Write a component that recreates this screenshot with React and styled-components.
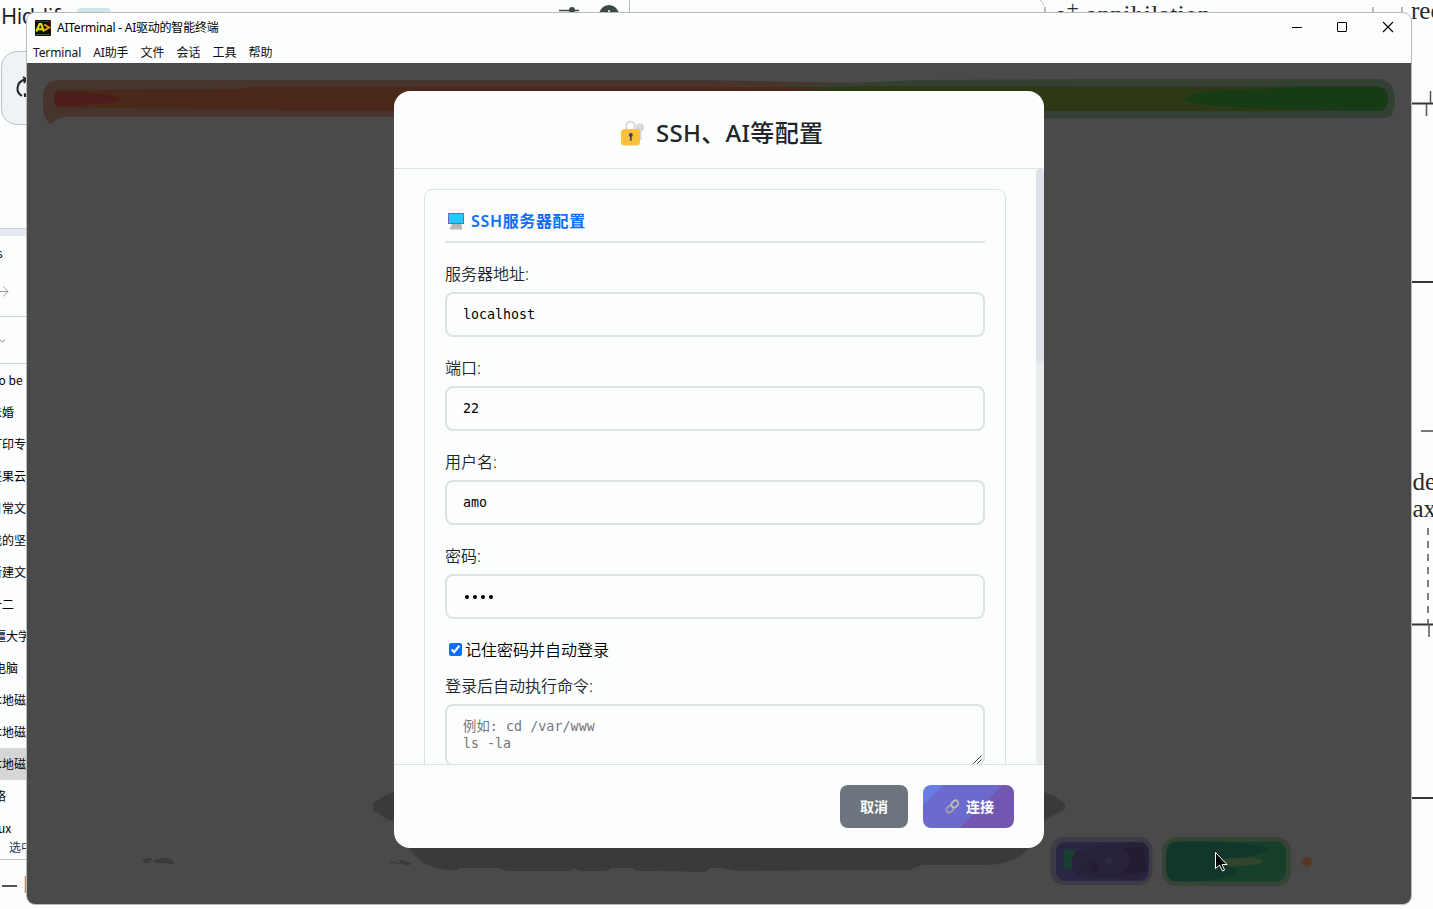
import React from "react";
import styled, { createGlobalStyle } from "styled-components";

const Global = createGlobalStyle`
  * { box-sizing: border-box; }
  html, body { margin: 0; padding: 0; overflow: hidden; background: #fcfdfd; }
  body { font-family: "Noto Sans", "Noto Sans CJK SC", sans-serif; color: #212529; }
`;

const Desktop = styled.div`
  position: relative;
  width: 1433px;
  height: 909px;
  overflow: hidden;
  background: #fcfdfd;
`;

/* ---------- windows lying behind ---------- */
const BackWindow = styled.section`
  position: absolute;
  left: ${(p) => p.$x}px;
  top: ${(p) => p.$y}px;
  width: ${(p) => p.$w}px;
  height: ${(p) => p.$h}px;
  overflow: hidden;
`;
const ProxyHeader = styled.header`
  display: flex;
  align-items: flex-start;
  height: 51px;
  padding-left: 1px;
`;
const ProxyName = styled.span`
  font: 400 22px/30px "Open Sans", sans-serif;
  letter-spacing: -0.5px;
  color: #1d2022;
  width: 76px;
`;
const ProxyBadge = styled.span`
  width: 34px;
  height: 20px;
  margin-top: 8px;
  border-radius: 4px;
  background: #cfe6eb;
`;
const ProxyCard = styled.div`
  display: flex;
  align-items: center;
  width: 120px;
  height: 74px;
  margin-left: 1px;
  padding-left: 13px;
  border: 1px solid #bcc3c6;
  border-radius: 16px;
  background: #eef3f6;
`;
const FileStrip = styled.div`
  height: 8px;
  background: #e5e9ee;
  border-top: 1px solid #cfd2d4;
`;
const Cell = styled.div`
  display: flex;
  align-items: center;
  height: ${(p) => p.$h}px;
  padding-bottom: ${(p) => p.$pb || 0}px;
  border-bottom: 1px solid ${(p) => (p.$line ? "#cfd2d4" : "transparent")};
`;
const FileRow = styled.div`
  height: 32px;
  font: 12px/31px "Noto Sans CJK SC", sans-serif;
  color: #000;
  white-space: nowrap;
  text-indent: ${(p) => p.$shift}px;
  letter-spacing: ${(p) => p.$ls || 0}px;
  background: ${(p) => (p.$active ? "#d6d6d6" : "transparent")};
`;
const StatusText = styled.div`
  padding-left: 9px;
  height: 20px;
  margin-top: -4px;
  font: 12px/14px "Noto Sans CJK SC", sans-serif;
  color: #24365e;
  white-space: nowrap;
  border-bottom: 1px solid #c0c0c0;
`;
const PaperText = styled.div`
  font: 25px/27px "Liberation Serif", serif;
  letter-spacing: ${(p) => p.$ls || 0}px;
  color: #2b2b2b;
  white-space: nowrap;
  margin-top: ${(p) => p.$mt}px;
  margin-left: ${(p) => p.$ml}px;
`;
const Superscript = styled.span`
  font-size: 22px;
  line-height: 0;
  vertical-align: 7px;
`;
const Art = styled.svg`
  position: absolute;
  inset: 0;
  display: block;
`;

/* ---------- main window ---------- */
const Window = styled.main`
  position: absolute;
  left: 26px;
  top: 12px;
  width: 1386px;
  height: 893px;
  display: flex;
  flex-direction: column;
  border: 1px solid #b9bbbb;
  border-radius: 9px;
  overflow: hidden;
  background: #fcfdfd;
`;
const TitleBar = styled.header`
  display: flex;
  align-items: center;
  height: 29px;
  padding: 0 17px 0 8px;
`;
const Title = styled.span`
  flex: 1;
  margin-left: 6px;
  font: 12px/20px "Noto Sans", "Noto Sans CJK SC", sans-serif;
  letter-spacing: -0.24px;
  color: #000;
`;
const WindowButtons = styled.div`
  display: flex;
  gap: ${33}px;
  margin-top: -1px;
`;
const MenuBar = styled.nav`
  display: flex;
  gap: 12px;
  height: 21px;
  padding-left: 6px;
  font: 12px/21px "Noto Sans", "Noto Sans CJK SC", sans-serif;
  color: #111;
`;
const MenuItem = styled.span`
  letter-spacing: ${(p) => p.$ls || 0}px;
`;
const Backdrop = styled.div`
  position: relative;
  flex: 1;
  display: flex;
  justify-content: center;
  align-items: flex-start;
  padding: 28px 0 0 0;
  background: #4a4a4a;
`;
const Dialog = styled.section`
  position: relative;
  display: flex;
  flex-direction: column;
  width: 650px;
  height: 757px;
  border-radius: 16px;
  overflow: hidden;
  background: #fcfdfd;
`;
const DialogHeader = styled.header`
  display: flex;
  align-items: center;
  gap: 11px;
  height: 78px;
  padding: 6px 0 0 226px;
  border-bottom: 1px solid #dee2e6;
`;
const DialogTitle = styled.h2`
  margin: 0;
  font: 500 24px/34px "Noto Sans", "Noto Sans CJK SC", sans-serif;
  letter-spacing: 0.3px;
  color: #212529;
`;
const DialogBody = styled.div`
  display: flex;
  height: 595px;
  overflow: hidden;
`;
const Scroller = styled.div`
  flex: 1;
  padding: 20px 30px;
`;
const ScrollTrack = styled.div`
  width: 8px;
  border-radius: 4px;
  background: #e9ecef;
`;
const ScrollThumb = styled.div`
  height: 194px;
  border-radius: 4px;
  background: #dee2e6;
`;
const Panel = styled.div`
  height: 640px;
  padding: 20px;
  border: 1px solid #dee2e6;
  border-radius: 8px;
`;
const PanelTitle = styled.h3`
  display: flex;
  align-items: center;
  gap: 6px;
  height: 33px;
  margin: 0 0 20px;
  padding: 0 0 9px 2px;
  border-bottom: 2px solid #dee2e6;
  font: 600 16px/22px "Noto Sans", "Noto Sans CJK SC", sans-serif;
  letter-spacing: 0.65px;
  color: #0d6efd;
`;
const Field = styled.div`
  margin-bottom: 20px;
`;
const Label = styled.div`
  height: 21px;
  margin-bottom: 8px;
  font: 350 16px/23px "Noto Sans", "Noto Sans CJK SC", sans-serif;
  color: #212529;
`;
const Input = styled.div`
  min-height: ${(p) => p.$h || 45}px;
  position: relative;
  padding: 12px 16px;
  border: 2px solid #dee2e6;
  border-radius: 8px;
  font: 13.3px/17px "DejaVu Sans Mono", "Noto Sans CJK SC", monospace;
  color: ${(p) => (p.$muted ? "#757575" : "#000")};
`;
const HintLine = styled.div`
  height: 17px;
  font: 13.3px/17px "DejaVu Sans Mono", "Noto Sans CJK SC", monospace;
  letter-spacing: ${(p) => p.$ls || 0}px;
  white-space: pre;
`;
const Dots = styled.div`
  display: flex;
  gap: 4px;
  padding: 7px 0 0 2px;
`;
const Dot = styled.span`
  width: 4px;
  height: 4px;
  border-radius: 2px;
  background: #000;
`;
const CheckRow = styled.label`
  display: flex;
  align-items: center;
  gap: 3px;
  height: 21px;
  margin-bottom: 15px;
  padding-left: 4px;
  font: 350 16px/21px "Noto Sans CJK SC", sans-serif;
  color: #000;
`;
const Check = styled.input`
  width: 13px;
  height: 13px;
  margin: 0;
  accent-color: #0d6efd;
`;
const Grip = styled.svg`
  position: absolute;
  right: 0;
  bottom: 0;
`;
const DialogFooter = styled.footer`
  display: flex;
  justify-content: flex-end;
  gap: 15px;
  height: 84px;
  padding: 20px 30px;
  border-top: 1px solid #dee2e6;
`;
const Button = styled.button`
  display: flex;
  align-items: center;
  justify-content: center;
  gap: 6px;
  width: ${(p) => p.$w}px;
  height: 43px;
  padding: 0 0 1px ${(p) => (p.$primary ? 2 : 0)}px;
  border: 0;
  border-radius: 8px;
  color: #fff;
  font: 600 14px/20px "Noto Sans CJK SC", sans-serif;
  background: ${(p) =>
    p.$primary
      ? "linear-gradient(135deg, #677de4 15%, #6d6acd 15%, #6d6acd 59%, #7257b2 59%)"
      : "#6c757d"};
`;

const AppIcon = () => (
  <svg width="16" height="16" viewBox="0 0 16 16">
    <rect width="16" height="16" rx="1" fill="#0b0d08" />
    <path d="M1 1.5H15M15.3 1V9" stroke="#7a1d12" strokeWidth="1" />
    <path d="M1 14.5H15" stroke="#256b1d" strokeWidth="1" />
    <path d="M1.3 11.500L4.500 4h1.600L9 11.500M3 9.300h4.800" stroke="#e3dd10" strokeWidth="2.100" fill="none" />
    <path d="M9.200 4.500L14 7.500L9.200 10.500" stroke="#e5a50e" strokeWidth="2" fill="none" />
  </svg>
);

const LockIcon = () => (
  <svg width="25" height="26" viewBox="0 0 25 26">
    <path d="M6.300 10V6.200a4.200 4.800 0 0 1 8.400 0V10" fill="none" stroke="#d9d9d9" strokeWidth="2" />
    <circle cx="20" cy="7.500" r="3.900" fill="#d3d3d3" />
    <path d="M18.800 9h2.700v11h-2.700z" fill="#d9d9d9" />
    <circle cx="20" cy="5.800" r="0.900" fill="#fcfdfd" />
    <rect x="1" y="9" width="19" height="16.500" rx="3.500" fill="#f9c23c" />
    <circle cx="10.800" cy="15" r="2" fill="#433b6b" />
    <path d="M10.800 15v5.800" stroke="#433b6b" strokeWidth="1.700" />
  </svg>
);

const ComputerIcon = () => (
  <svg width="18" height="17" viewBox="0 0 18 17">
    <rect x="4.500" y="10" width="10" height="4" fill="#b4b4b4" />
    <path d="M3 13.500h12v3H3z" fill="#b9b9b9" />
    <rect x="1.500" y="0.500" width="15" height="10" fill="#26c9fc" stroke="#7664bb" />
  </svg>
);

const LinkIcon = () => (
  <svg width="15" height="15" viewBox="0 0 15 15" fill="none" strokeWidth="1.8">
    <rect x="-3.8" y="-2.8" width="7.6" height="5.6" rx="2.8" transform="translate(4.9 10) rotate(-45)" stroke="#a3a3a3" />
    <rect x="-3.8" y="-2.8" width="7.6" height="5.6" rx="2.8" transform="translate(9.8 5) rotate(-45)" stroke="#bcbcbc" />
  </svg>
);

const Scene = () => (
  <Art width="1384" height="841" viewBox="27 63 1384 841">
    <path d="M60 80H700L860 83L1040 85V117H420L300 117H64Q56 119 50 124Q43 118 43 105V98Q43 80 60 80Z" fill="#47352d" />
    <path d="M780 86L920 80L1100 79H1378Q1395 80 1395 101Q1395 118 1384 118L1040 118.500L780 116Z" fill="#334033" />
    <path d="M56 90L240 89L250 87H860V111H280V109L56 108Q53 100 56 90Z" fill="#4a291a" />
    <path d="M790 91L860 86L1120 86.500H1378Q1388 88 1388 99Q1387 112 1378 111H800Z" fill="#2d3817" />
    <path d="M58 92Q90 91 122 98Q121 101 110 103L60 106Q52 105 55 94Z" fill="#4b1c1b" />
    <path d="M1184 99Q1190 91 1240 90L1300 87H1380Q1388 89 1388 99Q1387 111 1378 111L1250 108Q1190 105 1184 99Z" fill="#173b14" />
    <path d="M394 792L388 794L373 803V811L380 814L388 820L394 821Z M1044 792L1054 796L1065 803V809L1054 815L1044 821Z" fill="#3a3a3a" />
    <path d="M408 846H1030Q1018 863 990 865H921L910 870H849L740 871L732 870L722 868H710L705 872L660 871H636L632 868H611L607 871H580L574 868L569 871H506L499 868H459L457 870H446Q425 866 419 859Z" fill="#3a3a3a" />
    <path d="M388 861l4 3l-1-3l6 2l-1-2l5 3l-2-4l6 1l6 2l-1 2h-4l-4-1h-5zM142 861l4-3h5l1 2l-3 3h-5zM153 861l3-2h4l1-1h5l6 2l2 4h-5l-2-1h-13z" fill="#3a3a3a" />
    <path d="M412 850l7 7M409 849l8 9" stroke="#3a3a3a" />
    <rect x="1050.500" y="837" width="102" height="48" rx="13" fill="#3d3b45" />
    <rect x="1056" y="842" width="93" height="39" rx="9" fill="#292743" />
    <path d="M1068 861Q1070 846 1139 842Q1149 843 1149 860Q1148 880 1132 880L1080 876Q1067 870 1068 861Z" fill="#272239" />
    <path d="M1112 876Q1134 871 1130 856L1124 848L1144 847L1147 872ZM1083 871Q1089 870 1094 860L1100 872Z" fill="#231c33" />
    <path d="M1064 851Q1069 847 1076 851L1072 858V868Q1065 872 1063 866Z" fill="#183f30" />
    <ellipse cx="1109" cy="861" rx="4.500" ry="3" fill="#2e2b3c" />
    <rect x="1162" y="837" width="129" height="49" rx="14" fill="#374336" />
    <rect x="1166" y="841.500" width="120" height="40" rx="10" fill="#17402a" />
    <path d="M1176 842Q1250 840 1268 849Q1256 858 1216 861Q1240 868 1238 874Q1210 883 1176 881Q1166 879 1166 862Q1166 844 1176 842Z" fill="#13362a" />
    <path d="M1222 859Q1260 855 1263 861Q1260 867 1222 866Z" fill="#31452d" />
    <circle cx="1307" cy="862" r="5.200" fill="#55382b" />
    <path d="M1215.500 852.500V868.500L1219.500 865L1222.500 871L1224.500 870L1222 864.500H1227Z" fill="#000" stroke="#fff" />
  </Art>
);

const files = [
  ["to be n", -6, false, 0.1],
  ["未婚", -10],
  ["打印专", -10],
  ["坚果云", -10],
  ["日常文档", -10],
  ["我的坚", -10],
  ["新建文", -10],
  ["十二", -10],
  ["疆大学", -6],
  ["电脑", -6],
  ["本地磁", -10],
  ["本地磁", -10],
  ["本地磁", -10, true],
  ["络", -6],
  ["ux", -2],
];

const fields = [
  ["服务器地址:", "localhost"],
  ["端口:", "22"],
  ["用户名:", "amo"],
];

export default function App() {
  return (
    <>
      <Global />
      <Desktop>
        <BackWindow $x={0} $y={0} $w={630} $h={228}>
          <ProxyHeader>
            <ProxyName>Hiddify</ProxyName>
            <ProxyBadge />
          </ProxyHeader>
          <ProxyCard>
            <svg width="24" height="24" viewBox="0 0 24 24" fill="none" stroke="#20272a" strokeWidth="2">
              <path d="M7 20Q2 17 2.500 12Q3 5 11 3M8 1l3 2-2 4M9 18l3 1M9 20h4" />
            </svg>
          </ProxyCard>
          <Art width="630" height="20" viewBox="0 0 630 20">
            <path d="M559 10.500H579" stroke="#3d4844" strokeWidth="1.500" />
            <circle cx="572" cy="10" r="3" fill="#3d4844" />
            <circle cx="609" cy="15" r="10" fill="#3d4844" />
            <path d="M609 10v5" stroke="#fff" strokeWidth="1.500" />
            <path d="M629.500 0V20" stroke="#b9bcbc" />
          </Art>
        </BackWindow>

        <BackWindow $x={0} $y={228} $w={27} $h={681}>
          <FileStrip />
          <Cell $h={34}>
            <FileRow $shift={-3}>s</FileRow>
          </Cell>
          <Cell $h={47} $pb={5} $line>
            <svg width="10" height="14" viewBox="0 0 10 14" fill="none" stroke="#9a9a9a">
              <path d="M0 7.500H8M3 2.500L8 7.500L3 12.500" />
            </svg>
          </Cell>
          <Cell $h={47} $line>
            <svg width="6" height="5" viewBox="0 0 6 5" fill="none" stroke="#9a9a9a">
              <path d="M0 2l2 2l3-2" />
            </svg>
          </Cell>
          {files.map(([name, shift, active, ls], i) => (
            <FileRow key={i} $shift={shift} $active={active} $ls={ls}>
              {name}
            </FileRow>
          ))}
          <StatusText>选中</StatusText>
          <Art width="27" height="681" viewBox="0 228 27 681">
            <path d="M2 886H17" stroke="#555" strokeWidth="2" />
            <path d="M25.500 876V893" stroke="#c58a55" strokeWidth="1.500" />
          </Art>
        </BackWindow>

        <BackWindow $x={1040} $y={0} $w={371} $h={30}>
          <PaperText $mt={1} $ml={15} $ls={0.45}>
            e<Superscript>+</Superscript> annihilation
          </PaperText>
        </BackWindow>
        <BackWindow $x={1411} $y={0} $w={22} $h={909}>
          <PaperText $mt={-3} $ml={0}>rec</PaperText>
          <PaperText $mt={444} $ml={-5.5}>ide</PaperText>
          <PaperText $mt={0} $ml={-5.5}>lax</PaperText>
        </BackWindow>
        <Art width="1433" height="909" viewBox="0 0 1433 909" fill="none">
          <path d="M1040 0Q1043 1 1044 6" stroke="#c4c6c6" />
          <path d="M1045 7V13M1373 7V14M1402 7V14" stroke="#777" />
          <path d="M1411 103.500H1433M1411 282H1433M1411 624.500H1433M1411 798H1433" stroke="#3a3436" strokeWidth="2" />
          <path d="M1421 431H1433" stroke="#777" strokeWidth="2" />
          <path d="M1430.500 91V103M1426.500 104V116M1429 624V637" stroke="#555" strokeWidth="1.500" />
          <path d="M1428 528V624" stroke="#555" strokeWidth="1.500" strokeDasharray="7 6" />
        </Art>

        <Window>
          <TitleBar>
            <AppIcon />
            <Title>AITerminal - AI驱动的智能终端</Title>
            <WindowButtons>
              <svg width="12" height="12" viewBox="0 0 12 12"><path d="M1 6.500H11" stroke="#000" /></svg>
              <svg width="12" height="12" viewBox="0 0 12 12"><rect x="1.500" y="1.500" width="9" height="9" rx="0.500" fill="none" stroke="#000" /></svg>
              <svg width="13" height="12" viewBox="0 0 13 12"><path d="M2 1L12 11M12 1L2 11" stroke="#000" strokeWidth="1.100" /></svg>
            </WindowButtons>
          </TitleBar>
          <MenuBar>
            <MenuItem $ls={-0.12}>Terminal</MenuItem>
            <MenuItem $ls={-0.1}>AI助手</MenuItem>
            <MenuItem>文件</MenuItem>
            <MenuItem>会话</MenuItem>
            <MenuItem>工具</MenuItem>
            <MenuItem>帮助</MenuItem>
          </MenuBar>
          <Backdrop>
            <Scene />
            <Dialog>
              <DialogHeader>
                <LockIcon />
                <DialogTitle>SSH、AI等配置</DialogTitle>
              </DialogHeader>
              <DialogBody>
                <Scroller>
                  <Panel>
                    <PanelTitle>
                      <ComputerIcon />
                      SSH服务器配置
                    </PanelTitle>
                    {fields.map(([label, value]) => (
                      <Field key={label}>
                        <Label>{label}</Label>
                        <Input>{value}</Input>
                      </Field>
                    ))}
                    <Field>
                      <Label>密码:</Label>
                      <Input>
                        <Dots><Dot /><Dot /><Dot /><Dot /></Dots>
                      </Input>
                    </Field>
                    <CheckRow>
                      <Check type="checkbox" defaultChecked />
                      记住密码并自动登录
                    </CheckRow>
                    <Label>登录后自动执行命令:</Label>
                    <Input $muted $h={62}>
                      <HintLine $ls={0.08}>例如: cd /var/www</HintLine>
                      <HintLine>ls -la</HintLine>
                      <Grip width="12" height="12" viewBox="0 0 12 12" stroke="#444">
                        <path d="M2.500 11.500L10.500 3.500M6.500 11.500L10.500 7.500" />
                      </Grip>
                    </Input>
                  </Panel>
                </Scroller>
                <ScrollTrack>
                  <ScrollThumb />
                </ScrollTrack>
              </DialogBody>
              <DialogFooter>
                <Button $w={68}>取消</Button>
                <Button $w={91} $primary>
                  <LinkIcon />
                  连接
                </Button>
              </DialogFooter>
            </Dialog>
          </Backdrop>
        </Window>
      </Desktop>
    </>
  );
}
